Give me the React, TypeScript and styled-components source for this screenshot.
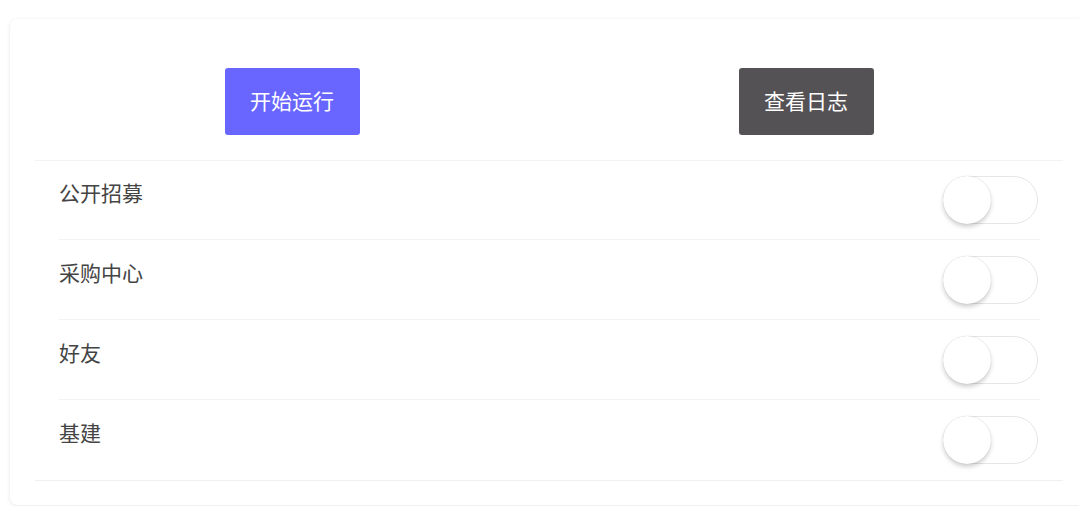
import { FC, useState } from 'react';
import styled, { createGlobalStyle } from 'styled-components';

const GlobalStyle = createGlobalStyle`
   html, body {
      margin: 0;
      padding: 0;
      background: #ffffff;
      overflow: hidden;
   }
   body {
      font-family: "Noto Sans CJK SC", "Noto Sans", sans-serif;
   }
`;

const tasks = ['公开招募', '采购中心', '好友', '基建'];

interface ToggleProps {
   on: boolean;
   onClick: () => void;
}

const Toggle: FC<ToggleProps> = ({ on, onClick }) => (
   <Track $on={on} onClick={onClick}>
      <Knob $on={on} />
   </Track>
);

export default function App() {
   const [enabled, setEnabled] = useState<boolean[]>(tasks.map(() => false));

   const flip = (i: number) =>
      setEnabled((prev) => prev.map((v, j) => (j === i ? !v : v)));

   return (
      <>
         <GlobalStyle />
         <Page>
            <Card>
               <Actions>
                  <ActionCell>
                     <ActionButton $variant="primary">开始运行</ActionButton>
                  </ActionCell>
                  <ActionCell>
                     <ActionButton $variant="dark">查看日志</ActionButton>
                  </ActionCell>
               </Actions>
               <TaskList>
                  {tasks.map((name, i) => (
                     <TaskRow key={name}>
                        <TaskName>{name}</TaskName>
                        <Toggle on={enabled[i]} onClick={() => flip(i)} />
                     </TaskRow>
                  ))}
               </TaskList>
            </Card>
         </Page>
      </>
   );
}

// Styled Components
const Page = styled.div`
   padding: 19px 0 0 10px;
   width: 1079px;
   height: 506px;
   box-sizing: border-box;
`;

const Card = styled.div`
   width: 1078px;
   box-sizing: border-box;
   padding: 0 25px 24px;
   background: #fff;
   border-radius: 8px;
   box-shadow: 0 1px 4px rgba(0, 0, 0, 0.1);
`;

const Actions = styled.div`
   display: grid;
   grid-template-columns: 1fr 1fr;
   padding: 49px 0 25px;
   border-bottom: 1px solid #f3f3f3;
`;

const ActionCell = styled.div`
   display: flex;
   justify-content: center;
`;

const ActionButton = styled.button<{ $variant: 'primary' | 'dark' }>`
   width: 135px;
   height: 67px;
   padding: 0 0 4px;
   border: none;
   border-radius: 3px;
   font-family: inherit;
   font-size: 21px;
   color: #fff;
   cursor: pointer;
   background: ${({ $variant }) => ($variant === 'primary' ? '#6966ff' : '#555255')};
`;

const TaskList = styled.div`
   border-bottom: 1px solid #f0f0f0;
`;

const TaskRow = styled.div`
   display: flex;
   justify-content: space-between;
   align-items: center;
   height: 79px;
   margin: 0 23px 0 24px;
   border-bottom: 1px solid #f3f3f3;

   &:first-child {
      height: 78px;
   }

   &:last-child {
      height: 80px;
      border-bottom: none;
   }
`;

const TaskName = styled.span`
   font-size: 21px;
   color: #444;
   margin-top: -16px;
`;

const Track = styled.div<{ $on: boolean }>`
   position: relative;
   width: 95px;
   height: 48px;
   margin-right: 2px;
   box-sizing: border-box;
   border-radius: 24px;
   border: 1px solid ${({ $on }) => ($on ? '#6966ff' : '#e6e6e6')};
   background: ${({ $on }) => ($on ? '#6966ff' : '#fff')};
   cursor: pointer;
   transition: background 0.2s;
`;

const Knob = styled.div<{ $on: boolean }>`
   position: absolute;
   top: -1px;
   left: ${({ $on }) => ($on ? '46px' : '-1px')};
   width: 48px;
   height: 48px;
   border-radius: 50%;
   background: #fff;
   box-shadow: 0 3px 4px rgba(0, 0, 0, 0.18), 0 0 1px rgba(0, 0, 0, 0.2);
   transition: left 0.2s;
`;
